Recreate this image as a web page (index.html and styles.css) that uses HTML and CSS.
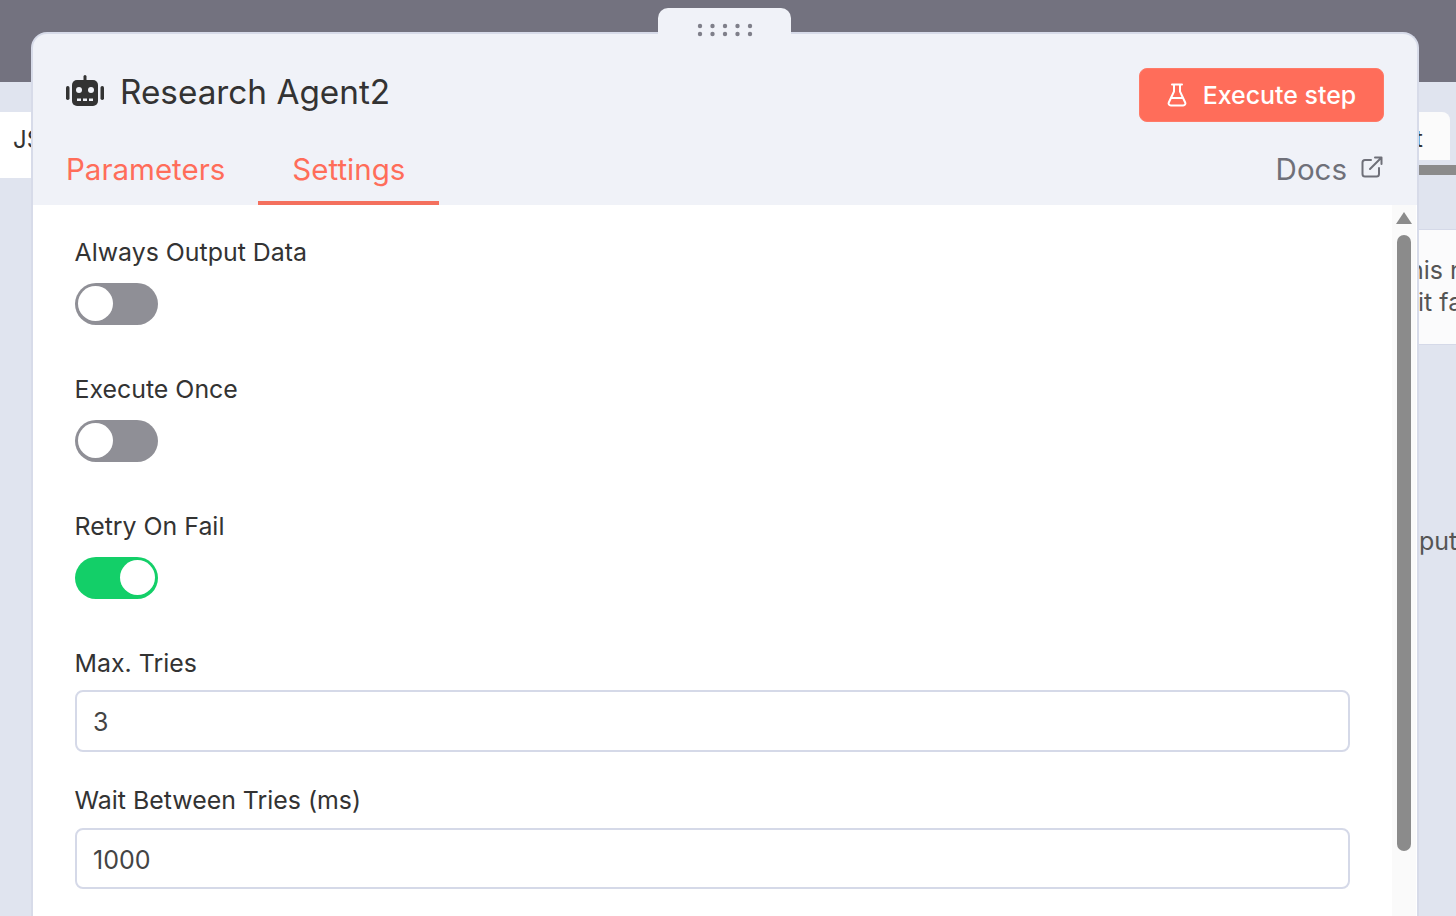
FILE: index.html
```html
<!DOCTYPE html>
<html lang="en">
<head>
    <meta charset="UTF-8">
    <title>Research Agent2</title>
    <link rel="stylesheet" href="styles.css">
</head>
<body>
    <div class="backdrop">
        <div class="topbar"></div>
        <div class="left-tab">JSON</div>
        <div class="right-tab">t</div>
        <div class="right-rule"></div>
        <div class="right-card">
            <div class="line-one">his n</div>
            <div class="line-two">it fa</div>
        </div>
        <div class="right-text">put</div>
    </div>

    <div class="modal">
        <div class="drag-handle">
            <svg width="56" height="14" viewBox="0 0 56 14">
                <g fill="#7f7f8a">
                    <circle cx="3" cy="3" r="2.2"/><circle cx="15.500" cy="3" r="2.2"/><circle cx="28" cy="3" r="2.2"/><circle cx="40.500" cy="3" r="2.2"/><circle cx="53" cy="3" r="2.2"/>
                    <circle cx="3" cy="11" r="2.2"/><circle cx="15.500" cy="11" r="2.2"/><circle cx="28" cy="11" r="2.2"/><circle cx="40.500" cy="11" r="2.2"/><circle cx="53" cy="11" r="2.2"/>
                </g>
            </svg>
        </div>

        <div class="modal-header">
            <div class="title-row">
                <div class="title">
                    <svg class="robot" width="40" height="32" viewBox="0 0 40 32">
                        <g fill="#333">
                            <rect x="18.500" y="0" width="3" height="6" rx="1.500"/>
                            <rect x="7" y="5" width="26" height="26" rx="5"/>
                            <rect x="1" y="11" width="3.500" height="14" rx="1.700"/>
                            <rect x="35.500" y="11" width="3.500" height="14" rx="1.700"/>
                        </g>
                        <g fill="#f0f2f8">
                            <circle cx="14" cy="15" r="3"/>
                            <circle cx="26" cy="15" r="3"/>
                            <rect x="12" y="23.500" width="4" height="2.500"/>
                            <rect x="18" y="23.500" width="4" height="2.500"/>
                            <rect x="24" y="23.500" width="4" height="2.500"/>
                        </g>
                    </svg>
                    <span>Research Agent2</span>
                </div>
                <button class="execute-btn">
                    <svg width="20" height="24" viewBox="0 0 20 24" fill="none" stroke="#fff" stroke-width="2" stroke-linecap="round" stroke-linejoin="round">
                        <path d="M5 1.500h10M7 1.500v7L1.800 19.500c-.7 1.500.3 3 2 3h12.400c1.700 0 2.700-1.500 2-3L13 8.500v-7"/>
                        <path d="M4.500 15h11"/>
                    </svg>
                    Execute step
                </button>
            </div>
            <div class="tabs">
                <div class="tab">Parameters</div>
                <div class="tab active">Settings</div>
                <a class="docs">Docs
                    <svg width="22" height="22" viewBox="0 0 22 22" fill="none" stroke="#6f7079" stroke-width="2" stroke-linecap="round" stroke-linejoin="round">
                        <path d="M10 4H4a2.500 2.500 0 0 0-2.500 2.500V18A2.500 2.500 0 0 0 4 20.500h11.500A2.500 2.500 0 0 0 18 18v-6"/>
                        <path d="M9 13L20.500 1.500M14 1.500h6.500V8"/>
                    </svg>
                </a>
            </div>
        </div>

        <div class="modal-body">
            <div class="settings">
                <div class="field">
                    <label>Always Output Data</label>
                    <div class="toggle"><span class="knob"></span></div>
                </div>
                <div class="field">
                    <label>Execute Once</label>
                    <div class="toggle"><span class="knob"></span></div>
                </div>
                <div class="field">
                    <label>Retry On Fail</label>
                    <div class="toggle on"><span class="knob"></span></div>
                </div>
                <div class="field">
                    <label>Max. Tries</label>
                    <input type="text" value="3">
                </div>
                <div class="field">
                    <label>Wait Between Tries (ms)</label>
                    <input type="text" value="1000">
                </div>
            </div>
            <div class="scroll-gutter">
                <div class="scroll-arrow"></div>
                <div class="scroll-thumb"></div>
            </div>
        </div>
    </div>
</body>
</html>
```

FILE: styles.css
```css
html, body {
    margin: 0;
    padding: 0;
    height: 916px;
    overflow: hidden;
}
body {
    font-family: Inter, 'Liberation Sans', sans-serif;
    background: #e0e4ef;
    position: relative;
}
.topbar {
    height: 82px;
    background: #73727f;
}
.left-tab {
    position: absolute;
    left: 0;
    top: 112px;
    width: 40px;
    height: 66px;
    padding-left: 13px;
    box-sizing: border-box;
    background: #fff;
    color: #333;
    font-size: 24px;
    line-height: 55px;
    overflow: hidden;
}
.right-tab {
    position: absolute;
    left: 1400px;
    top: 112px;
    width: 50px;
    height: 48px;
    box-sizing: border-box;
    padding-left: 15px;
    background: #fbfbfb;
    border-radius: 0 8px 0 0;
    color: #333;
    font-size: 24px;
    line-height: 54px;
}
.right-rule {
    position: absolute;
    left: 1400px;
    right: 0;
    top: 165px;
    height: 10px;
    background: #8b8b8b;
}
.right-card {
    position: absolute;
    left: 1400px;
    top: 229px;
    width: 80px;
    height: 116px;
    box-sizing: border-box;
    padding-top: 24px;
    background: #fbfbfc;
    border: 1px solid #d5d9e8;
    color: #555;
    font-size: 25px;
    line-height: 32px;
    white-space: nowrap;
}
.line-one {
    padding-left: 8px;
}
.line-two {
    padding-left: 17px;
}
.right-text {
    position: absolute;
    left: 1419px;
    top: 525px;
    color: #555;
    font-size: 25px;
    line-height: 32px;
}

/* modal */
.modal {
    position: absolute;
    left: 31px;
    top: 32px;
    width: 1388px;
    height: 900px;
    box-sizing: border-box;
    border: 2px solid #d7dbe9;
    border-bottom: 0;
    border-radius: 16px 16px 0 0;
    background: #f0f2f8;
    display: flex;
    flex-direction: column;
}
.drag-handle {
    position: absolute;
    left: 625px;
    top: -26px;
    width: 133px;
    height: 28px;
    background: #f0f2f8;
    border-radius: 10px 10px 0 0;
    display: flex;
    justify-content: center;
    padding-top: 15px;
    box-sizing: border-box;
}
.modal-header {
    height: 171px;
    box-sizing: border-box;
    padding: 34px 33px 0 33px;
    flex-shrink: 0;
}
.title-row {
    display: flex;
    justify-content: space-between;
    align-items: flex-start;
    height: 83px;
}
.title {
    display: flex;
    align-items: center;
    gap: 15px;
    height: 48px;
    margin-left: -1px;
    font-size: 33.300px;
    color: #333;
}
.robot {
    flex-shrink: 0;
    margin-top: -3px;
}
.execute-btn {
    width: 245px;
    height: 54px;
    border: 1px solid #ff7a68;
    border-radius: 8px;
    background: #ff6d5a;
    color: #fff;
    font-family: inherit;
    font-size: 24.900px;
    font-weight: 500;
    display: flex;
    align-items: center;
    justify-content: center;
    gap: 16px;
}
.tabs {
    display: flex;
    align-items: flex-start;
    height: 54px;
}
.tab {
    color: #ff6d5a;
    font-size: 29.500px;
    height: 54px;
    line-height: 37px;
    padding-right: 67px;
}
.tab.active {
    position: relative;
    padding: 0;
}
.tab.active::after {
    content: '';
    position: absolute;
    left: -34px;
    right: -34px;
    bottom: 0;
    height: 4px;
    background: #f4705e;
}
.docs {
    margin-left: auto;
    margin-right: 1px;
    display: flex;
    align-items: flex-start;
    gap: 14px;
    color: #6f7079;
    font-size: 29.500px;
    line-height: 37px;
}
.docs svg {
    margin-top: 5px;
}

/* body */
.modal-body {
    flex: 1;
    background: #fff;
    display: flex;
    min-height: 0;
}
.settings {
    flex: 1;
    padding: 29px 42px 0 42px;
}
.field {
    height: 137px;
}
label {
    display: block;
    height: 49px;
    margin-left: -0.500px;
    font-size: 24.900px;
    line-height: 36px;
    color: #333;
}
.toggle {
    width: 83px;
    height: 42px;
    border-radius: 21px;
    background: #8f8f96;
    position: relative;
}
.toggle.on {
    background: #13cf68;
}
.knob {
    position: absolute;
    left: 3px;
    top: 3px;
    width: 35px;
    height: 35px;
    border-radius: 50%;
    background: #fff;
}
.toggle.on .knob {
    left: 45px;
}
input {
    display: block;
    width: 100%;
    height: 62px;
    margin-top: -4px;
    box-sizing: border-box;
    padding: 2px 17px 0 16px;
    border: 2px solid #d5d9e8;
    border-radius: 8px;
    background: #fff;
    color: #444;
    font-family: inherit;
    font-size: 25px;
}
.field:last-child input {
    margin-top: -3px;
    height: 61px;
}
.scroll-gutter {
    width: 24px;
    margin-right: 1px;
    background: #fafafa;
    flex-shrink: 0;
    position: relative;
}
.scroll-arrow {
    position: absolute;
    left: 4px;
    top: 7px;
    width: 0;
    height: 0;
    border-left: 8px solid transparent;
    border-right: 8px solid transparent;
    border-bottom: 12px solid #8b8b8b;
}
.scroll-thumb {
    position: absolute;
    left: 5px;
    top: 30px;
    width: 14px;
    height: 616px;
    border-radius: 7px;
    background: #8b8b8b;
}
```
